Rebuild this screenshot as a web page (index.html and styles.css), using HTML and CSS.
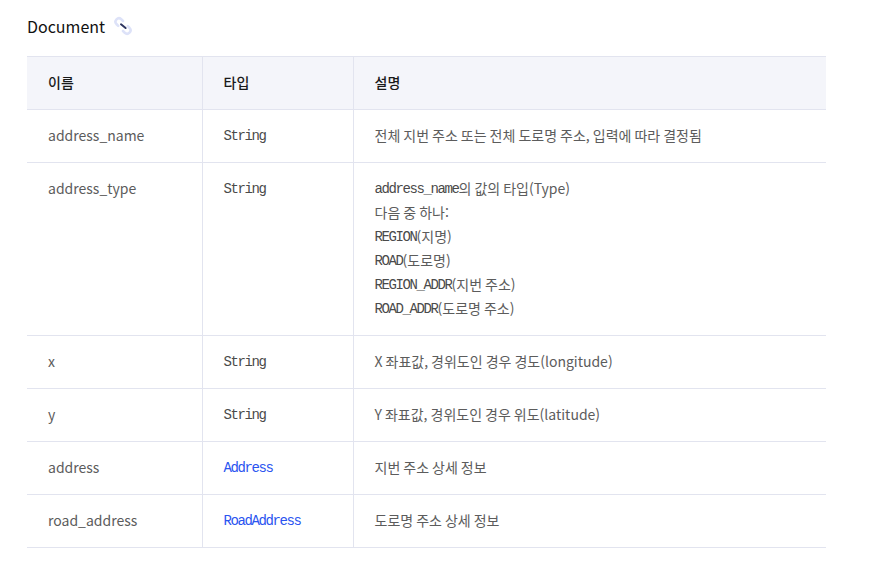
FILE: index.html
```html
<!DOCTYPE html>
<html lang="ko">
<head>
<meta charset="utf-8">
<title>Document</title>
<link rel="stylesheet" href="styles.css">
</head>
<body>
<h3 class="title">Document
<svg class="link" width="20" height="20" viewBox="0 0 20 20" fill="none">
<path d="M10 5 8.2 3.2a3.4 3.4 0 0 0-4.8 4.8L5.2 9.8" stroke="#dde2f8" stroke-width="2.6" stroke-linecap="round"/>
<path d="M10 15l1.8 1.8a3.4 3.4 0 0 0 4.8-4.8l-1.8-1.8" stroke="#dde2f8" stroke-width="2.6" stroke-linecap="round"/>
<path d="M8 8.3 12.6 12" stroke="#2d3560" stroke-width="2" stroke-linecap="round"/>
</svg>
</h3>
<table class="doc">
<colgroup><col class="c1"><col class="c2"><col class="c3"></colgroup>
<thead>
<tr><th>이름</th><th>타입</th><th>설명</th></tr>
</thead>
<tbody>
<tr><td>address_name</td><td><code>String</code></td><td>전체 지번 주소 또는 전체 도로명 주소, 입력에 따라 결정됨</td></tr>
<tr><td>address_type</td><td><code>String</code></td><td><code>address_name</code>의 값의 타입(Type)<br>다음 중 하나:<br><code>REGION</code>(지명)<br><code>ROAD</code>(도로명)<br><code>REGION_ADDR</code>(지번 주소)<br><code>ROAD_ADDR</code>(도로명 주소)</td></tr>
<tr><td>x</td><td><code>String</code></td><td>X 좌표값, 경위도인 경우 경도(longitude)</td></tr>
<tr><td>y</td><td><code>String</code></td><td>Y 좌표값, 경위도인 경우 위도(latitude)</td></tr>
<tr><td>address</td><td><a href="#address"><code>Address</code></a></td><td>지번 주소 상세 정보</td></tr>
<tr><td>road_address</td><td><a href="#road"><code>RoadAddress</code></a></td><td>도로명 주소 상세 정보</td></tr>
</tbody>
</table>
</body>
</html>
```
FILE: styles.css
```css
html, body { margin: 0; padding: 0; background: #fff; }
body {
  padding: 15px 0 0 27px;
  font-family: "Noto Sans CJK KR", "Noto Sans", sans-serif;
  color: #5c5c5c;
}
.title {
  display: flex;
  align-items: center;
  gap: 8px;
  margin: 0 0 19px;
  height: 22px;
  font-size: 16px;
  font-weight: 400;
  line-height: 22px;
  color: #111;
}
.link { flex: none; }
.doc {
  border-collapse: collapse;
  table-layout: fixed;
  width: 799px;
  font-size: 14px;
  line-height: 24px;
  word-spacing: -0.9px;
}
.c1 { width: 175px; }
.c2 { width: 151px; }
.doc th, .doc td {
  padding: 13px 21px 15px;
  text-align: left;
  vertical-align: top;
  border-top: 1px solid #e2e4ef;
  border-bottom: 1px solid #e2e4ef;
}
.doc th + th, .doc td + td { border-left: 1px solid #e2e4ef; }
.doc th {
  background: #f4f5fa;
  font-weight: 500;
  color: #1a1a1a;
}
code {
  font-family: "Liberation Mono", monospace;
  font-size: 14px;
  line-height: 0;
  vertical-align: 1px;
  letter-spacing: -1.4px;
  color: #4a4a4a;
}
.doc a { text-decoration: none; }
.doc a code { color: #2a54f0; }
```
